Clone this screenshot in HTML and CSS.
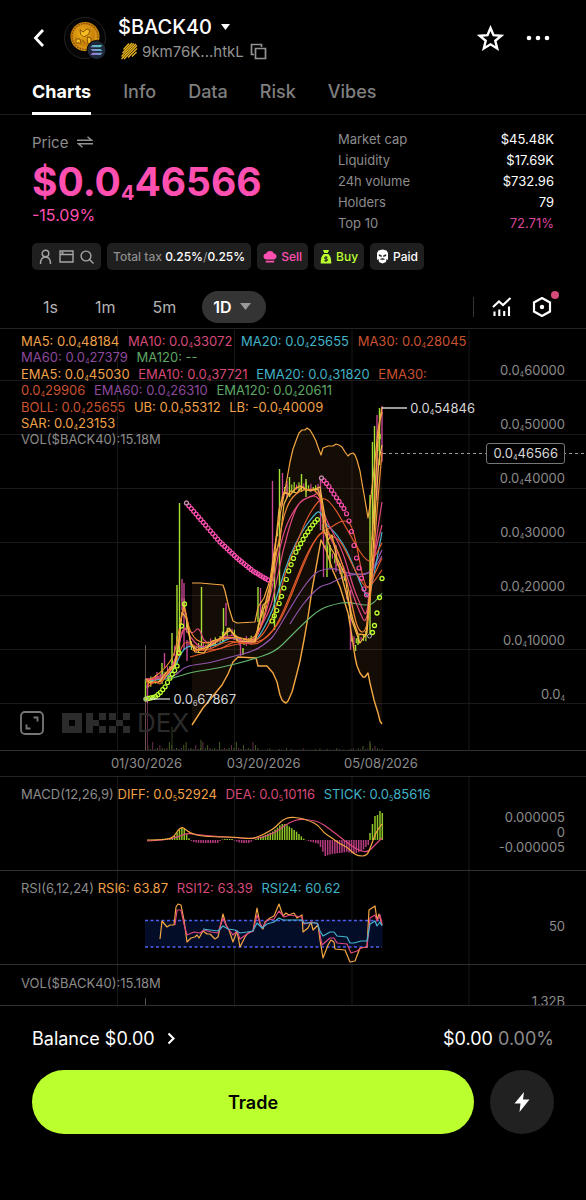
FILE: index.html
```html
<!DOCTYPE html>
<html lang="en">
<head>
<meta charset="utf-8">
<meta name="viewport" content="width=device-width, initial-scale=1">
<title>$BACK40</title>
<link rel="stylesheet" href="styles.css">
</head>
<body>
<div class="app">
  <header class="header">
    <button class="icon-btn back" aria-label="Back">
      <svg width="14" height="20" viewBox="0 0 14 20"><path d="M11 2 3.5 10 11 18" fill="none" stroke="#fff" stroke-width="2.8"/></svg>
    </button>
    <svg class="avatar" width="46" height="46" viewBox="0 0 46 46" aria-hidden="true">
      <defs>
        <radialGradient id="gold" cx=".42" cy=".4" r=".65"><stop offset="0" stop-color="#f3b516"/><stop offset=".6" stop-color="#c9800a"/><stop offset="1" stop-color="#e2a012"/></radialGradient>
        <linearGradient id="sol" x1="0" y1="1" x2="1" y2="0"><stop offset="0" stop-color="#a06bdc"/><stop offset="1" stop-color="#45d6b8"/></linearGradient>
      </defs>
      <circle cx="22" cy="23" r="20.5" fill="#050505" stroke="#222"/>
      <circle cx="22" cy="21.500" r="14.5" fill="url(#gold)"/>
      <circle cx="22" cy="21.500" r="13" fill="none" stroke="#7c4904" stroke-width="1.200" stroke-dasharray="1.500 1.200"/>
      <circle cx="22" cy="21.500" r="10.800" fill="none" stroke="#d99a1c" stroke-width=".8"/>
      <path d="M17 14.500 20 17l4-3 3 1.500-1.500 4-5 2.500-3-3zM13 24h4l1 4h-5zM24 22l4 1v6h-3zM19 24.500l3 4" fill="#f7bd22" stroke="#7c4904" stroke-width=".9"/>
      <circle cx="33.500" cy="35" r="9.500" fill="#20283c" stroke="#000"/>
      <path d="M29.500 30h10l-2 2.200h-10zM27.500 33.900h10l2 2.200h-10zM29.500 37.800h10l-2 2.200h-10z" fill="url(#sol)"/>
    </svg>
    <div class="token">
      <button class="token-name">$BACK40
        <svg width="9" height="6" viewBox="0 0 9 6"><path d="M0 0h9L4.500 6z" fill="#fff"/></svg>
      </button>
      <button class="address" aria-label="Copy address">
        <svg width="18" height="18" viewBox="0 0 18 18" fill="none" stroke="#e9b41e" stroke-width="1.300"><path d="M3.500 7.500 9 1.500M2.500 11 12 1M1.500 14.500 14 1.500M1.500 17 16 2M4 17 17 3.500M8 15.500 17 6.500M12 14.500l4.500-4.500"/></svg>
        <span>9km76K...htkL</span>
        <svg class="copy" width="17" height="17" viewBox="0 0 17 17" fill="none" stroke="#929292" stroke-width="1.700"><path d="M5.500 5.500h10v10h-10zM4 11.500H1.500v-10h10V4"/></svg>
      </button>
    </div>
    <button class="icon-btn" aria-label="Favorite">
      <svg width="27" height="27" viewBox="0 0 27 27"><path d="m13.500 3 3 7.200 7.700.6-5.900 5 1.900 7.600-6.700-4.100-6.700 4.100 1.900-7.600-5.900-5 7.700-.6z" fill="none" stroke="#fff" stroke-width="2.400"/></svg>
    </button>
    <button class="icon-btn more" aria-label="More">
      <svg width="24" height="6" viewBox="0 0 24 6" fill="#fff"><circle cx="3" cy="3" r="2.300"/><circle cx="12" cy="3" r="2.300"/><circle cx="21" cy="3" r="2.300"/></svg>
    </button>
  </header>

  <nav class="tabs">
    <a href="#charts" class="tab active">Charts</a><a href="#info" class="tab">Info</a><a href="#data" class="tab">Data</a><a href="#risk" class="tab">Risk</a><a href="#vibes" class="tab">Vibes</a>
  </nav>

  <section class="summary">
    <div class="price">
      <button class="price-label">Price
        <svg width="16" height="12" viewBox="0 0 16 12" fill="none" stroke="#929292" stroke-width="1.400"><path d="M0 4.200h14.500L10.500.7M16 7.800H1.500l4 3.500"/></svg>
      </button>
      <div class="price-value">$0.0<sub>4</sub>46566</div>
      <div class="price-change">-15.09%</div>
    </div>
    <dl class="stats">
      <div><dt>Market cap</dt><dd>$45.48K</dd></div>
      <div><dt>Liquidity</dt><dd>$17.69K</dd></div>
      <div><dt>24h volume</dt><dd>$732.96</dd></div>
      <div><dt>Holders</dt><dd>79</dd></div>
      <div><dt>Top 10</dt><dd class="pink">72.71%</dd></div>
    </dl>
  </section>

  <div class="chips">
    <button class="chip links" aria-label="Links">
      <svg width="13" height="16" viewBox="0 0 13 16" fill="none" stroke="#a5a5a5" stroke-width="1.400"><circle cx="6.500" cy="4.500" r="3.300"/><path d="M1.500 15c0-4.500 1.500-7 5-7s5 2.500 5 7"/></svg>
      <svg width="15" height="13" viewBox="0 0 15 13" fill="none" stroke="#a5a5a5" stroke-width="1.400"><path d="M1 1h13v11H1zM1 4.500h13"/><path d="M2.500 2.800h2" stroke-width="2"/></svg>
      <svg width="14" height="14" viewBox="0 0 14 14" fill="none" stroke="#a5a5a5" stroke-width="1.400"><circle cx="6" cy="6" r="4.900"/><path d="m9.500 9.500 4 4"/></svg>
    </button>
    <button class="chip"><span class="muted">Total tax</span> 0.25%<span class="muted">/</span>0.25%</button>
    <button class="chip pink">
      <svg width="14" height="14" viewBox="0 0 14 14" fill="#ff4fb0"><path d="M3 9.500C-.5 8.500-.3 3.700 3.300 3.500 4 .2 10 .2 10.700 3.500c3.600.2 3.800 5 .3 6zM2.800 10.800h8.400v1.700H2.800z"/></svg>Sell</button>
    <button class="chip lime">
      <svg width="12" height="16" viewBox="0 0 12 16"><path d="M3 1h6L7.800 4H4.200zM3.700 5h4.600c2.400 2 3 5 3 9.500H.7C.7 10 1.300 7 3.700 5z" fill="#bcff2f"/><path d="M7.500 8.200H5.200c-1 0-1 1.700 0 1.700h1.600c1 0 1 1.900 0 1.900H4.300M6 7.200v5.600" stroke="#1f1f1f" fill="none"/></svg>Buy</button>
    <button class="chip">
      <svg width="13" height="15" viewBox="0 0 13 15"><path d="M1 4 2.500 1.500 6.500.5l4 1L12 4v7l-1.500-1L10 13l-3.500 1.500L3 13l-.5-3L1 11z" fill="#fff"/><path d="M3 5.500l2.500 1v1.300L3 6.800zM7.500 6.500l2.500-1v1.300l-2.500 1zM4.300 10.200l2.200-1 2.200 1-2.200.6z" fill="#1f1f1f" stroke="#1f1f1f" stroke-width=".4"/></svg>Paid</button>
  </div>

  <div class="toolbar">
    <div class="frames">
      <button class="frame">1s</button>
      <button class="frame">1m</button>
      <button class="frame">5m</button>
      <button class="frame selected">1D <svg width="11" height="7" viewBox="0 0 11 7"><path d="M0 0h11L5.500 7z" fill="#999"/></svg></button>
    </div>
    <div class="tools">
      <button class="icon-btn" aria-label="Indicators">
        <svg width="20" height="20" viewBox="0 0 20 20" fill="none" stroke="#fff" stroke-width="2.100"><path d="m1 10 6-5.500 4 3.500 7.500-7M2.500 19v-4.500M7.300 19v-6.500M12.200 19v-5M17 19V9.500"/></svg>
      </button>
      <button class="icon-btn settings" aria-label="Chart settings">
        <svg width="20" height="20" viewBox="0 0 20 20"><path d="m10 1 8 4.500v9L10 19l-8-4.500v-9z" fill="none" stroke="#fff" stroke-width="2.200"/><circle cx="10" cy="10" r="2.200" fill="#fff"/></svg>
        <i class="dot"></i>
      </button>
    </div>
  </div>

  <main class="chart">
    <section class="panel main-panel">
      <svg class="plot" id="plot-main" viewBox="0 330 586 420" preserveAspectRatio="none" aria-hidden="true"></svg>
      <div class="watermark">
        <button class="icon-btn" aria-label="Full screen"><svg width="24" height="24" viewBox="0 0 24 24" fill="none" stroke="#777" stroke-width="1.800"><rect x="1" y="1" width="22" height="22" rx="4"/><path d="M13.500 6.500h4v4M6.500 13.500v4h4"/></svg></button>
        <svg width="68" height="20" viewBox="0 0 68 20" fill="#2b2b2b"><path fill-rule="evenodd" d="M0 0h20v20H0zm7 7v6h6V7zM24 0h7v7h6v6h-6v7h-7zM37 0h7v7h-7zM37 13h7v7h-7zM47 0h7v7h-7zM61 0h7v7h-7zM54 7h7v6h-7zM47 13h7v7h-7zM61 13h7v7h-7z"/></svg>
        <span>DEX</span>
      </div>
      <div class="legend">
        <div class="group"><span class="c-orange">MA5: 0.0<sub>4</sub>48184</span> <span class="c-pink">MA10: 0.0<sub>4</sub>33072</span> <span class="c-cyan">MA20: 0.0<sub>4</sub>25655</span> <span class="c-red">MA30: 0.0<sub>4</sub>28045</span> <span class="c-purple">MA60: 0.0<sub>4</sub>27379</span> <span class="c-green">MA120: --</span></div>
        <div class="group"><span class="c-orange">EMA5: 0.0<sub>4</sub>45030</span> <span class="c-pink">EMA10: 0.0<sub>4</sub>37721</span> <span class="c-cyan">EMA20: 0.0<sub>4</sub>31820</span> <span class="c-red">EMA30: 0.0<sub>4</sub>29906</span> <span class="c-purple">EMA60: 0.0<sub>4</sub>26310</span> <span class="c-green">EMA120: 0.0<sub>4</sub>20611</span></div>
        <div class="group"><span class="c-red">BOLL: 0.0<sub>4</sub>25655</span> <span class="c-orange">UB: 0.0<sub>4</sub>55312</span> <span class="c-orange">LB: -0.0<sub>5</sub>40009</span><br><span class="c-orange">SAR: 0.0<sub>4</sub>23153</span><br>VOL($BACK40):15.18M</div>
      </div>
      <div class="scale price-scale">
        <span>0.0<sub>4</sub>60000</span><span>0.0<sub>4</sub>50000</span><span>0.0<sub>4</sub>40000</span><span>0.0<sub>4</sub>30000</span><span>0.0<sub>4</sub>20000</span><span>0.0<sub>4</sub>10000</span><span>0.0<sub>4</sub></span>
      </div>
      <span class="mark high">0.0<sub>4</sub>54846</span>
      <span class="mark low">0.0<sub>6</sub>67867</span>
      <span class="last-price">0.0<sub>4</sub>46566</span>
    </section>
    <section class="dates"><span>01/30/2026</span><span>03/20/2026</span><span>05/08/2026</span></section>
    <section class="panel">
      <svg class="plot" id="plot-macd" viewBox="0 777 586 93" preserveAspectRatio="none" aria-hidden="true"></svg>
      <div class="legend"><span class="name">MACD(12,26,9)</span> <span class="c-orange">DIFF: 0.0<sub>5</sub>52924</span> <span class="c-pink">DEA: 0.0<sub>5</sub>10116</span> <span class="c-cyan">STICK: 0.0<sub>5</sub>85616</span></div>
      <div class="scale"><span>0.000005</span><span>0</span><span>-0.000005</span></div>
    </section>
    <section class="panel">
      <svg class="plot" id="plot-rsi" viewBox="0 871 586 93" preserveAspectRatio="none" aria-hidden="true"></svg>
      <div class="legend"><span class="name">RSI(6,12,24)</span> <span class="c-orange">RSI6: 63.87</span> <span class="c-pink">RSI12: 63.39</span> <span class="c-cyan">RSI24: 60.62</span></div>
      <div class="scale"><span>50</span></div>
    </section>
    <section class="panel vol-panel">
      <svg class="plot" id="plot-vol" viewBox="0 964 586 41" preserveAspectRatio="none" aria-hidden="true"></svg>
      <div class="legend">VOL($BACK40):15.18M</div>
      <div class="scale"><span>1.32B</span></div>
    </section>
  </main>

  <footer class="footer">
    <div class="balance">
      <button class="balance-btn">Balance $0.00
        <svg width="9" height="13" viewBox="0 0 9 13"><path d="m1.500 1.500 5 5-5 5" fill="none" stroke="#fff" stroke-width="2.100"/></svg>
      </button>
      <div>$0.00 <span class="muted">0.00%</span></div>
    </div>
    <div class="actions">
      <button class="trade">Trade</button>
      <button class="flash" aria-label="Instant trade"><svg width="16" height="20" viewBox="0 0 16 20"><path d="M10 0 .5 11.500h6L5.500 20 15.500 7.500H9z" fill="#fff"/></svg></button>
    </div>
  </footer>
</div>
<script src="chart.js"></script>
</body>
</html>
```
FILE: styles.css
```css
* { box-sizing: border-box; }
body {
  margin: 0;
  background: #000;
  color: #fff;
  font-family: Inter, "Liberation Sans", sans-serif;
  font-size: 13px;
}
button {
  display: flex;
  align-items: center;
  padding: 0;
  border: 0;
  background: none;
  color: inherit;
  font: inherit;
  cursor: pointer;
}
a { color: inherit; text-decoration: none; }
svg { display: block; flex: none; }
sub { font-size: 7px; line-height: 0; vertical-align: -2px; }
.app { display: flex; flex-direction: column; min-height: 100vh; }
.muted { color: #8c8c8c; }
.pink { color: #ff4fb0; }
.lime { color: #bcff2f; }

.header { display: flex; align-items: center; height: 76px; padding: 0 32px; }
.back { margin-right: 17px; }
.avatar { margin-right: 9px; }
.token { flex: 1; }
.token-name { gap: 9px; height: 26px; font-size: 20px; font-weight: 500; }
.address { gap: 4px; height: 22px; margin-left: 2px; color: #929292; font-size: 15px; }
.copy { margin-left: 2px; }
.more { margin-left: 22px; margin-right: 4px; }

.tabs { display: flex; gap: 32px; height: 39px; padding: 0 32px; border-bottom: 1px solid #1c1c1c; }
.tab { display: flex; align-items: center; height: 39px; padding-bottom: 5px; color: #7f7f7f; font-size: 18px; font-weight: 500; border-bottom: 3px solid transparent; }
.tab.active { color: #fff; font-weight: 700; border-color: #fff; }

.summary { display: flex; justify-content: space-between; padding: 14px 32px 0; }
.price-label { gap: 9px; height: 26px; color: #8c8c8c; font-size: 15px; }
.price-value { color: #ff4fb0; font-size: 39px; line-height: 54px; font-weight: 700; }
.price-value sub { font-size: 20px; vertical-align: -4px; }
.price-change { color: #ff4fb0; font-size: 16px; line-height: 12px; }
.stats { flex: 0 0 41.4%; margin: 0; line-height: 21px; }
.stats div { display: flex; justify-content: space-between; }
.stats dt { color: #8c8c8c; }
.stats dd { margin: 0; }
.stats .pink { color: #d9469b; }

.chips { display: flex; gap: 6px; margin-top: 9px; padding: 0 32px; }
.chip { height: 27px; padding: 0 6px; border-radius: 5px; background: #1f1f1f; font-size: 12px; font-weight: 500; white-space: pre; }
.chip svg { margin-right: 4px; }
.chip.links { justify-content: space-between; width: 69px; padding: 0 7px; }
.chip.links svg { margin: 0; }

.toolbar { display: flex; align-items: center; justify-content: space-between; height: 59px; padding: 15px 32px 0; border-bottom: 1px solid #242424; margin-bottom: 1px; }
.frames { display: flex; align-items: center; height: 32px; }
.frame { height: 32px; padding: 0 11px; margin-right: 15px; color: #b4b4b4; font-size: 16px; }
.frame.selected { gap: 8px; margin: 0; padding: 0 15px 0 11px; border-radius: 16px; background: #343434; color: #fff; font-weight: 600; }
.tools { display: flex; gap: 20px; padding-left: 18px; border-left: 1px solid #333; }
.settings { position: relative; margin-right: 2px; }
.dot { position: absolute; top: -6px; right: -7px; width: 8px; height: 8px; border-radius: 50%; background: #d64a78; }

.chart { color: #8c8c8c; }
.panel { position: relative; display: flex; justify-content: space-between; height: 94px; padding: 9px 21px 0; border-bottom: 1px solid #303030; overflow: hidden; }
.plot { position: absolute; inset: 0; width: 100%; height: 100%; }
.main-panel { height: 421px; padding-top: 3px; }
.vol-panel { height: 41px; padding-top: 10px; }
.legend { position: relative; flex: 0 1 456px; line-height: 16px; }
.legend .group { margin-bottom: 1px; }
.legend span { margin-right: 5px; }
.legend .name { margin-right: 0; }
.c-orange { color: #f0a24a; }
.c-pink { color: #d64a78; }
.c-cyan { color: #40b3c6; }
.c-red { color: #c95230; }
.c-purple { color: #8d4a9c; }
.c-green { color: #5fa765; }
.scale { position: relative; display: flex; flex-direction: column; align-items: flex-end; justify-content: center; padding-top: 8px; line-height: 15px; }
.vol-panel .scale { justify-content: flex-start; padding-top: 19px; }
.price-scale { justify-content: flex-start; gap: 38px; padding: 29px 0 0; line-height: 16px; }
.main-panel > .mark, .main-panel > .last-price { position: absolute; color: #d8d8d8; line-height: 20px; }
.main-panel > .high { left: 70%; top: 68px; }
.main-panel > .low { left: 29.6%; top: 359px; }
.main-panel > .last-price { right: 21px; top: 113px; padding: 0 6px; border: 1px solid #777; border-radius: 3px; background: #000; line-height: 19px; }
.watermark { position: absolute; left: 20px; bottom: 15px; display: flex; align-items: center; color: #2b2b2b; font-size: 26px; line-height: 24px; }
.watermark svg { margin-right: 7px; }
.watermark .icon-btn { margin-right: 11px; }
.dates { display: grid; grid-template-columns: 20fr 20fr 20fr 25fr; padding-left: 15%; height: 26px; border-bottom: 1px solid #242424; line-height: 24px; text-align: center; }

.footer { padding: 20px 32px 0; }
.balance { display: flex; justify-content: space-between; align-items: center; height: 25px; font-size: 18px; }
.balance-btn { gap: 12px; }
.actions { display: flex; gap: 16px; margin-top: 19px; }
.trade { flex: 1; justify-content: center; height: 64px; border-radius: 32px; background: #bcff2f; color: #000; font-size: 18px; font-weight: 600; }
.flash { justify-content: center; width: 64px; height: 64px; border-radius: 50%; background: #212121; }
```
FILE: chart.js
```js
const NS = 'http://www.w3.org/2000/svg';
const COLORS = { orange: '#f4a742', pink: '#e0487f', magenta: '#ff4fb0', cyan: '#45b5d0', red: '#e0592b', purple: '#9455b0', green: '#62b46c', lime: '#bcff2f' };

function add(svg, tag, attrs) {
  const el = document.createElementNS(NS, tag);
  for (const key in attrs) el.setAttribute(key, attrs[key]);
  svg.appendChild(el);
}
function line(svg, points, color, width = 1.2) {
  add(svg, 'polyline', { points, fill: 'none', stroke: color, 'stroke-width': width, 'stroke-linejoin': 'round' });
}
function seg(svg, x1, y1, x2, y2, color, width = 1) {
  add(svg, 'line', { x1, y1, x2, y2, stroke: color, 'stroke-width': width });
}
function toPoints(text) { return text.trim().split(/\s+/).map(p => p.split(',').map(Number)); }
function valueAt(points, x) {
  for (let i = 1; i < points.length; i++) {
    if (x <= points[i][0]) {
      const [a, b] = [points[i - 1], points[i]];
      return a[1] + (b[1] - a[1]) * (x - a[0]) / (b[0] - a[0]);
    }
  }
  return points[points.length - 1][1];
}
function smooth(svg, text, color, width = 1.2) {
  const p = toPoints(text);
  let d = `M${p[0]}`;
  for (let i = 1; i < p.length - 1; i++) d += `Q${p[i]} ${(p[i][0] + p[i + 1][0]) / 2},${(p[i][1] + p[i + 1][1]) / 2}`;
  d += `L${p[p.length - 1]}`;
  add(svg, 'path', { d, fill: 'none', stroke: color, 'stroke-width': width });
}
function dots(svg, text, step, color) {
  const p = toPoints(text);
  for (let x = p[0][0]; x <= p[p.length - 1][0] + 0.5; x += step) {
    add(svg, 'circle', { cx: x, cy: valueAt(p, x), r: 2, fill: 'none', stroke: color, 'stroke-width': 1.2 });
  }
}
function gridColumns(svg, top, bottom) {
  for (const x of [117.5, 234.5, 352, 469]) seg(svg, x, top, x, bottom, '#191919');
}

const main = document.getElementById('plot-main');
gridColumns(main, 330, 750);
for (const y of [380.5, 434.5, 488.5, 542.5, 595.5, 649.5, 703.5]) seg(main, 0, y, 586, y, '#191919');

const upper = '192,583 200,583 223,585 225,591 229,608 233,621 237,623 255,622 258,607 264,598 270,580 275,545 280,515 285,490 290,462 293,449 297,438 299,433 302,430 305,430 307,428 310,430 313,435 316,441 318,447 321,455 323,448 328,446 333,446 336,444 339,445 342,447 345,452 348,456 350,454 353,453 355,455 357,460 360,471 362,483 365,500 368,518 370,505 374,470 378,430 382,407';
const lower = '192,725 203,708 213,696 222,685 228,674 233,662 238,657 256,658 258,666 267,666 273,673 277,682 280,695 282,700 284,702 286,703 288,701 292,692 296,677 300,661 304,640 308,617 312,590 316,568 321,540 326,550 333,571 340,587 348,613 352,637 355,657 357,666 360,673 363,677 365,677 368,673 370,683 374,700 378,713 380,721 382,724';
add(main, 'polygon', { points: upper + ' ' + lower.split(' ').reverse().join(' '), fill: '#f4a742', 'fill-opacity': 0.08 });

// volume bars
for (let i = 0; i < 100; i++) {
  const h = i % 7 === 3 ? 8 : i % 5 === 1 ? 5 : i % 2 ? 2 : 1;
  const scale = i < 48 ? 1 : i > 88 ? 0.8 : 0.2;
  const x = 145.5 + i * 2.39;
  seg(main, x, 750 - h * scale, x, 750, i % 3 ? '#485c21' : '#67304d');
}
seg(main, 145.5, 645, 145.5, 750, '#66544c');
seg(main, 147.5, 700, 147.5, 750, '#632443');
seg(main, 172, 727, 172, 750, '#34401c');
seg(main, 201, 740, 201, 750, '#485c21');
seg(main, 370, 741, 370, 750, '#485c21');

const closes = toPoints('145,688 150,683 165,675 172,665 177,640 180,600 184,600 188,643 195,650 205,647 220,640 230,630 240,643 255,640 265,610 272,585 278,530 284,490 300,487 320,490 324,545 335,560 345,580 352,643 366,637 371,560 377,450 382,430');
for (let i = 0; i < 99; i++) {
  const x = 146 + i * 2.39;
  const y = valueAt(closes, x);
  const h = 2 + (i * 7) % 5;
  seg(main, x, y - h, x, y + h * 0.7, i % 3 ? '#a8df35' : '#c74493', 1.2);
}
const wicks = [
  [145.5, 679, 700, 1], [147.5, 680, 703, 0], [157, 672, 680, 0], [162, 663, 684, 1], [164.5, 653, 668, 0], [172, 633, 668, 1],
  [177, 585, 665, 1], [179.5, 503, 655, 1], [182, 579, 610, 0], [184, 583, 650, 0], [187, 640, 661, 0], [201.5, 587, 650, 1],
  [223.5, 608, 642, 1], [226, 603, 626, 0], [240.5, 640, 656, 0], [243, 648, 655, 1], [258, 587, 622, 1], [260.5, 588, 618, 0],
  [272.5, 481, 580, 0], [274.5, 553, 630, 1], [279.5, 469, 600, 1], [282.5, 473, 498, 0], [287, 481, 498, 0], [289.5, 477, 497, 1],
  [301.5, 474, 492, 1], [306, 479, 497, 1], [320.5, 480, 530, 0], [323.5, 520, 577, 0], [327, 530, 577, 1], [330, 545, 568, 1],
  [336, 545, 572, 0], [340, 563, 574, 0], [350.5, 590, 650, 0], [355.5, 645, 651, 1], [358, 638, 645, 1], [370, 495, 634, 1],
  [372.5, 442, 540, 1], [374.5, 426, 530, 1], [377, 415, 500, 0], [379.5, 408, 465, 1], [382, 406, 462, 0]
];
for (const [x, y1, y2, up] of wicks) seg(main, x, y1, x, y2, up ? '#a8df35' : '#c74493', 1.4);

line(main, upper, COLORS.orange);
line(main, lower, COLORS.orange, 1.4);
smooth(main, '145,680 165,680 180,676 192,672 220,668 250,660 275,652 290,637 305,622 320,609 335,604 347,602 368,606 375,602 382,593', COLORS.green);
smooth(main, '145,679 160,680 175,676 183,668 192,665 210,663 230,657 255,651 270,640 275,634 285,617 300,592 312,576 320,570 335,568 345,573 365,575 375,568 382,556', COLORS.purple);
smooth(main, '290,624 298,611 308,598 320,586 330,584 342,577 355,574 368,575 375,565 382,550', COLORS.purple);
smooth(main, '145,681 160,680 173,673 184,645 200,648 218,645 232,636 245,642 254,643 262,632 273,610 280,585 290,555 302,531 314,515 320,510 326,525 335,532 347,550 357,575 364,592 369,598 374,575 382,532', COLORS.cyan);
smooth(main, '192,650 205,652 228,640 245,644 256,642 268,628 278,602 286,570 296,545 306,520 315,505 322,498 328,500 336,510 344,524 352,538 360,552 366,560 372,562 382,543', COLORS.red);
smooth(main, '190,657 215,650 240,643 256,643 270,636 282,615 296,580 308,551 318,536 325,530 332,527 340,521 350,521 356,541 362,575 368,592 374,575 382,558', COLORS.red);
smooth(main, '146,679 160,680 173,670 180,650 186,640 200,650 220,650 235,640 255,646 268,636 280,622 292,594 302,568 314,541 322,531 332,536 340,540 350,560 360,580 368,590 382,570', COLORS.red);
smooth(main, '146,680 165,679 174,665 180,640 185,625 192,635 199,626 204,643 215,643 232,633 245,643 254,643 262,624 270,610 276,585 283,550 292,518 300,500 312,497 320,491 325,528 334,545 344,567 353,595 360,613 366,625 371,590 376,540 382,502', COLORS.pink);
smooth(main, '146,679 165,677 176,660 183,624 190,637 200,648 210,645 225,637 238,640 254,643 264,620 272,590 278,555 285,528 294,510 302,500 318,493 326,520 336,538 344,555 354,590 362,608 367,618 373,560 382,525', COLORS.pink);
line(main, '146,679 150,683 158,682 163,680 170,670 174,667 178,650 181,620 184,604 188,625 191,645 197,650 205,648 215,643 230,630 237,637 247,640 255,640 260,620 265,605 270,585 274,560 279,510 284,492 290,495 296,488 301,486 306,490 318,489 321,498 324,530 330,547 335,555 340,570 348,600 353,620 358,634 366,635 369,600 372,540 375,490 378,440 380,420 382,412', COLORS.orange, 1.4);
line(main, '146,680 158,683 170,668 175,665 179,640 182,612 186,618 190,640 195,652 204,653 212,641 222,638 229,628 238,641 255,642 263,605 269,600 275,555 280,540 284,504 290,491 297,493 302,487 310,491 320,487 324,511 328,540 332,535 337,558 345,575 351,618 356,632 360,643 367,633 372,570 376,500 379,460 382,445', '#f5bc45');
smooth(main, '146,682 172,668 180,625 184,603 190,635 204,645 225,637 240,638 255,640 266,613 278,545 286,505 300,489 320,490 324,525 340,553 351,600 358,632 367,632 372,580 377,510 382,452', '#f08a36');
line(main, '146,680 149,686 155,681 160,684 170,669', COLORS.red);

dots(main, '186.5,503 202,521 220,542 237,558 253,571 268,580', 2.39, COLORS.magenta);
dots(main, '321.5,478 328,485 338,500 345,510 347,515 350,524 353,539 355,552 358,564 361,576 364,589 367,596', 2.5, COLORS.magenta);
dots(main, '146,699 155,697 160,693 165,687 170,678 175,670 177,666', 2.39, COLORS.lime);
for (const [cx, cy] of [[179, 653], [181.5, 626], [184.5, 604], [372.5, 632.5], [374.5, 625.5], [377, 613], [379.5, 597.5], [382, 578.5]]) {
  add(main, 'circle', { cx, cy, r: 2, fill: 'none', stroke: COLORS.lime, 'stroke-width': 1.3 });
}
dots(main, '272,621 277,610 282,595 289,570 296,552 305,536 314,523 319,518', 2.39, COLORS.lime);
for (const [cx, cy] of [[146, 699], [186.5, 503], [321.5, 478], [369.5, 636]]) add(main, 'circle', { cx, cy, r: 2, fill: 'none', stroke: '#aaa' });
seg(main, 382, 408, 407, 408, '#ddd', 1.4);
seg(main, 150, 699, 170, 699, '#ddd', 1.2);
add(main, 'line', { x1: 383, y1: 453.5, x2: 586, y2: 453.5, stroke: '#999', 'stroke-width': 1, 'stroke-dasharray': '3 3' });

const macd = document.getElementById('plot-macd');
gridColumns(macd, 777, 870);
const sticks = toPoints('146,840 160,839 170,838 174,837 178,831 181,828 184,828 187,835 190,840 193,842 200,843 218,843 221,840 224,839 232,839 235,841 241,843 249,843 254,840 258,838 265,835 272,832 277,828 281,824 285,824 290,827 297,832 305,840 312,842 319,844 325,856 332,854 347,852 354,854 362,851 368,845');
for (let i = 0; i < 94; i++) {
  const x = 146 + i * 2.39;
  const y = valueAt(sticks, x);
  seg(macd, x, 840, x, y, y < 840 ? '#8fc526' : '#b63c80', 1.5);
}
for (const [x, y] of [[370, 833], [372.5, 824], [375, 816], [377.5, 815], [380, 811], [382.3, 813]]) seg(macd, x, 840, x, y, '#8fc526', 1.5);
smooth(macd, '147,841 165,840 178,837 187,833 200,835 225,837 255,839 270,835 280,829 290,822 300,819 310,820 320,822 335,833 350,845 360,851 368,852 374,846 382,838', COLORS.pink);
smooth(macd, '147,840 162,840 173,838 178,830 182,827 185,829 190,833 200,836 220,837 235,837 250,839 258,837 268,832 276,827 282,820 290,817 300,818 310,821 318,825 324,833 332,838 340,844 347,847 353,853 358,856 367,856 371,846 376,832 382,824', COLORS.orange);

const rsi = document.getElementById('plot-rsi');
gridColumns(rsi, 871, 964);
add(rsi, 'rect', { x: 145, y: 920, width: 237.5, height: 27, fill: '#040d28' });
for (const y of [920.5, 947]) add(rsi, 'line', { x1: 145, y1: y, x2: 382, y2: y, stroke: '#4d5ff0', 'stroke-width': 1.3, 'stroke-dasharray': '3 2.5' });
line(rsi, '160,939 162,921 167,927 170,925 174,925 176,907 178,904 181,905 184,920 187,942 191,938 195,937 197,935 199,938 203,931 207,934 210,934 215,939 218,937 223,914 226,925 229,930 233,942 237,931 240,947 245,937 248,933 253,931 257,908 260,924 263,929 265,922 270,918 274,916 279,904 283,916 286,913 289,915 294,913 297,918 302,915 303,932 308,928 311,922 313,930 318,925 320,940 323,958 328,945 331,940 334,942 335,949 345,950 350,962 355,961 360,948 367,947 369,910 375,906 377,920 379,914 382,925', COLORS.orange);
line(rsi, '175,925 177,910 181,910 184,924 187,935 194,932 200,933 204,930 211,932 218,933 223,918 227,927 233,935 237,931 240,939 247,934 253,931 257,915 262,928 267,920 274,919 279,911 284,917 290,915 302,917 304,924 312,922 318,924 322,945 330,938 334,938 337,943 347,944 351,953 357,951 361,948 367,947 370,918 375,915 377,921 380,915 382,924', COLORS.pink);
line(rsi, '203,929 210,930 218,931 223,926 228,929 235,930 240,933 247,932 253,931 257,923 262,928 267,924 274,922 279,918 283,920 302,920 304,923 317,923 320,931 323,936 330,932 334,932 337,936 347,937 350,943 354,943 361,941 367,941 370,924 375,921 377,926 380,922 382,926', COLORS.cyan);

const vol = document.getElementById('plot-vol');
gridColumns(vol, 964, 1005);
seg(vol, 145.5, 998, 145.5, 1005, '#555');
```
